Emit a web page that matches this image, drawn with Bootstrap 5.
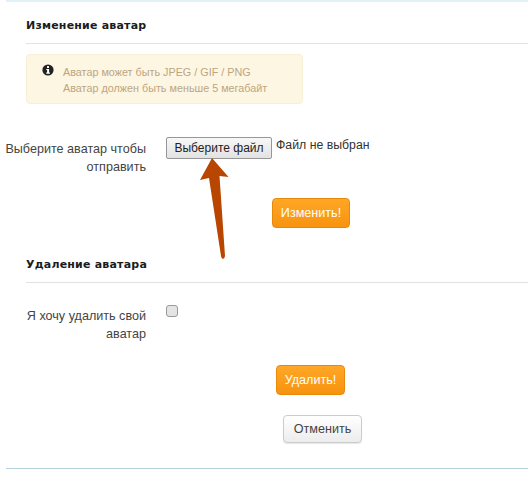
<!DOCTYPE html>
<html lang="ru">
<head>
  <meta charset="UTF-8" />
  <meta name="viewport" content="width=device-width, initial-scale=1" />
  <title>Изменение аватар</title>
  <link href="https://cdn.jsdelivr.net/npm/bootstrap@5.3.2/dist/css/bootstrap.min.css" rel="stylesheet"/>
  <style>
    html, body { height: 485px; overflow: hidden; }
    body { background: #fff; font-family: "Liberation Sans", Arial, sans-serif; font-size: 12.6px; color: #444; position: relative; }
    .page-wrap { margin-left: 6px; border-top: 2px solid #e3f2f9; height: 469px; border-bottom: 1px solid #b5d3da; padding-top: 17px; }
    .sect { margin-left: 20px; }
    .sect-two { margin-top: 30px; }
    .sect-head { font-family: "DejaVu Sans", Verdana, sans-serif; font-weight: 700; font-size: 11px; letter-spacing: .2px; color: #1c1c1c; line-height: 14px; padding-bottom: 10px; border-bottom: 1px solid #e2e2e2; }
    .note-box { width: 277px; height: 50px; margin-top: 10px; background: #fdf6e3; border: 1px solid #f8efd6; border-radius: 4px; padding: 9px 0 0 15px; font-size: 10.8px; line-height: 16px; color: #bda57f; }
    .note-ico { width: 12px; height: 12px; flex: none; }
    .note-text { margin-left: 9px; }
    .field-row-a { margin-top: 33px; }
    .field-row-b { margin-top: 21px; }
    .lbl { width: 146px; margin-left: -6px; margin-top: 3px; text-align: right; line-height: 18px; flex: none; }
    .field-val { margin-left: 20px; }
    .file-btn { width: 106px; height: 22px; padding: 0; font-size: 12px; line-height: 20px; color: #222; background: linear-gradient(#f8f8f8, #e2e2e2); border: 1px solid #979797; border-radius: 2px; }
    .file-name { margin-left: 4px; margin-top: 1px; color: #333; line-height: 14px; font-size: 12.3px; }
    .go-btn { height: 30px; padding: 0; font-size: 12.6px; color: #fff; background: linear-gradient(#ffa726, #f7930f); border: 1px solid #e8890c; border-radius: 4px; }
    .go-btn:hover { color: #fff; background: #f7930f; }
    .btn-change { width: 78px; }
    .btn-del { width: 69px; }
    .btn-cancel { width: 79px; height: 28px; padding: 0; font-size: 12.6px; color: #444; background: linear-gradient(#fff, #ececec); border: 1px solid #ccc; border-radius: 4px; box-shadow: 0 1px 1px rgba(0,0,0,.1); }
    .btn-line-a { margin: 22px 0 0 266px; }
    .btn-line-b { margin: 22px 0 0 270px; }
    .btn-line-c { margin: 20px 0 0 277px; }
    .tick { width: 12px; height: 12px; margin-top: 1px; background: #e4e4e4; border: 1px solid #9a9a9a; border-radius: 3px; appearance: none; display: block; }
    .arrow-over { position: absolute; left: 190px; top: 150px; }
  </style>
</head>
<body>

<div class="page-wrap">
  <div class="sect">
    <div class="sect-head">Изменение аватар</div>
    <div class="note-box d-flex">
      <svg class="note-ico" viewBox="0 0 12 12"><circle cx="6" cy="6" r="5.6" fill="#222"/><rect x="5" y="2.1" width="2" height="1.9" fill="#fff"/><path d="M4.3 5h2.8v3.6h.8v1.1H4.2V8.6h.9V6.1h-.8z" fill="#fff"/></svg>
      <div class="note-text">Аватар может быть JPEG / GIF / PNG<br>Аватар должен быть меньше 5 мегабайт</div>
    </div>
  </div>

  <div class="d-flex field-row-a">
    <div class="lbl">Выберите аватар чтобы<br>отправить</div>
    <div class="d-flex align-items-start field-val">
      <button type="button" class="file-btn">Выберите файл</button>
      <span class="file-name">Файл не выбран</span>
    </div>
  </div>
  <div class="btn-line-a"><button type="button" class="btn go-btn btn-change">Изменить!</button></div>

  <div class="sect sect-two">
    <div class="sect-head">Удаление аватара</div>
  </div>

  <div class="d-flex field-row-b">
    <div class="lbl">Я хочу удалить свой<br>аватар</div>
    <div class="field-val"><input type="checkbox" class="tick" aria-label="Удалить"></div>
  </div>
  <div class="btn-line-b"><button type="button" class="btn go-btn btn-del">Удалить!</button></div>
  <div class="btn-line-c"><button type="button" class="btn btn-cancel">Отменить</button></div>
</div>

<svg class="arrow-over" width="50" height="115" viewBox="190 150 50 115">
  <path d="M212 158 L228.500 177 L219.500 176 L225 256 Q224.500 259 223 259 Q221.500 259 221 256 L209 178 L200 180 Z" fill="#b84500"/>
</svg>

</body>
</html>
